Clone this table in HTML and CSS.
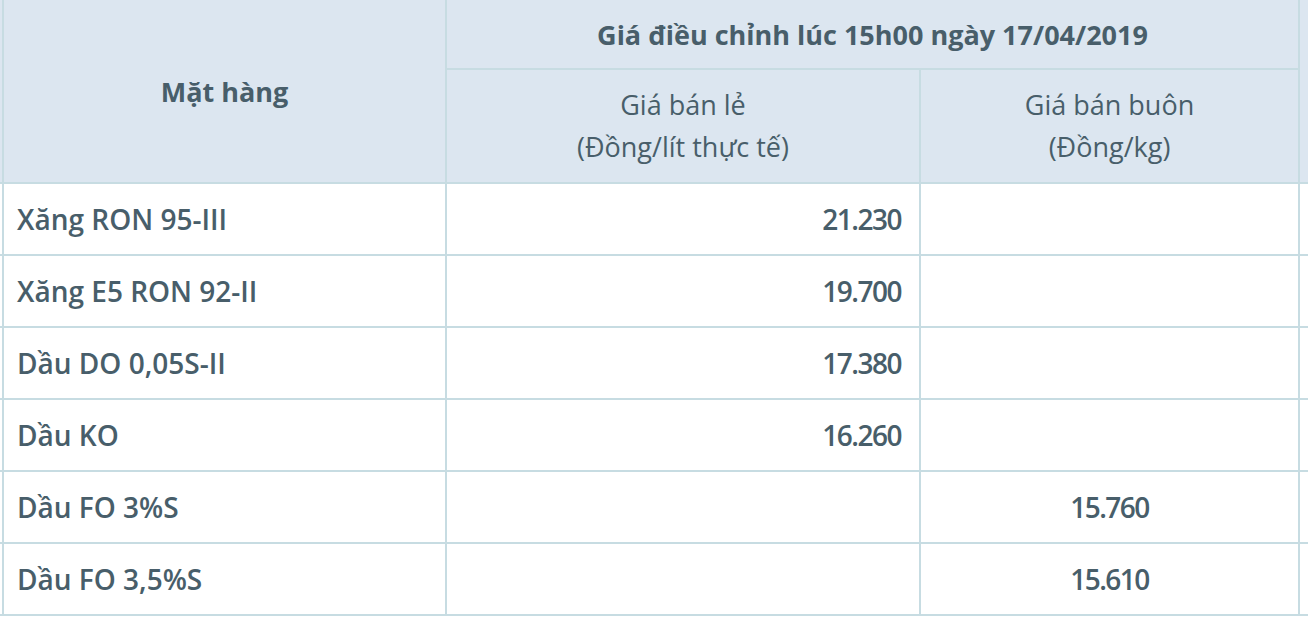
FILE: index.html
```html
<!DOCTYPE html>
<html lang="vi">
<head>
<meta charset="utf-8">
<title>Giá xăng dầu</title>
<link rel="stylesheet" href="styles.css">
</head>
<body>
<div class="frame">
<table class="prices">
  <colgroup>
    <col class="c-edge-l">
    <col class="c-item">
    <col class="c-retail">
    <col class="c-whole">
    <col class="c-edge-r">
  </colgroup>
  <thead>
    <tr class="h1">
      <th class="edge" rowspan="2"></th>
      <th class="item" rowspan="2">Mặt hàng</th>
      <th class="title" colspan="2">Giá điều chỉnh lúc 15h00 ngày 17/04/2019</th>
      <th class="edge" rowspan="2"></th>
    </tr>
    <tr class="h2">
      <th class="sub">Giá bán lẻ<br>(Đồng/lít thực tế)</th>
      <th class="sub">Giá bán buôn<br>(Đồng/kg)</th>
    </tr>
  </thead>
  <tbody>
    <tr><td class="edge"></td><td class="name">Xăng RON 95-III</td><td class="num">21.230</td><td class="whole"></td><td class="edge"></td></tr>
    <tr><td class="edge"></td><td class="name">Xăng E5 RON 92-II</td><td class="num">19.700</td><td class="whole"></td><td class="edge"></td></tr>
    <tr><td class="edge"></td><td class="name">Dầu DO 0,05S-II</td><td class="num">17.380</td><td class="whole"></td><td class="edge"></td></tr>
    <tr><td class="edge"></td><td class="name">Dầu KO</td><td class="num">16.260</td><td class="whole"></td><td class="edge"></td></tr>
    <tr><td class="edge"></td><td class="name">Dầu FO 3%S</td><td class="num"></td><td class="whole">15.760</td><td class="edge"></td></tr>
    <tr><td class="edge"></td><td class="name">Dầu FO 3,5%S</td><td class="num"></td><td class="whole">15.610</td><td class="edge"></td></tr>
  </tbody>
</table>
</div>
</body>
</html>
```

FILE: styles.css
```css
html, body {
  margin: 0;
  padding: 0;
  background: #ffffff;
}

.frame {
  width: 1308px;
  height: 624px;
  overflow: hidden;
}

.prices {
  margin-left: -10px;
  border-collapse: separate;
  border-spacing: 0;
  table-layout: fixed;
  width: 1330px;
  font-family: "Open Sans", "Liberation Sans", sans-serif;
  font-size: 28px;
  color: #485e6a;
}

.c-edge-l { width: 14px; }
.c-item { width: 443px; }
.c-retail { width: 474px; }
.c-whole { width: 379px; }
.c-edge-r { width: 20px; }

.prices th,
.prices td {
  box-sizing: border-box;
  padding: 0;
  border-right: 2px solid #c7dce2;
  border-bottom: 2px solid #c7dce2;
  vertical-align: middle;
}

.prices thead th {
  background: #dce6f0;
  font-size: 27px;
}

.h1 { height: 70px; }
.h2 { height: 114px; }

.item {
  font-weight: 700;
  text-align: center;
}

.title {
  font-weight: 700;
  text-align: center;
}

.sub {
  font-weight: 400;
  text-align: center;
  line-height: 42px;
}

.prices tbody tr { height: 72px; }

.name {
  font-weight: 600;
  text-align: left;
  padding-left: 13px !important;
}

.num {
  font-weight: 650;
  font-stretch: 88%;
  letter-spacing: -1.5px;
  text-align: right;
  padding-right: 18px !important;
}

.whole {
  font-weight: 650;
  font-stretch: 88%;
  letter-spacing: -1.5px;
  text-align: center;
}
```
